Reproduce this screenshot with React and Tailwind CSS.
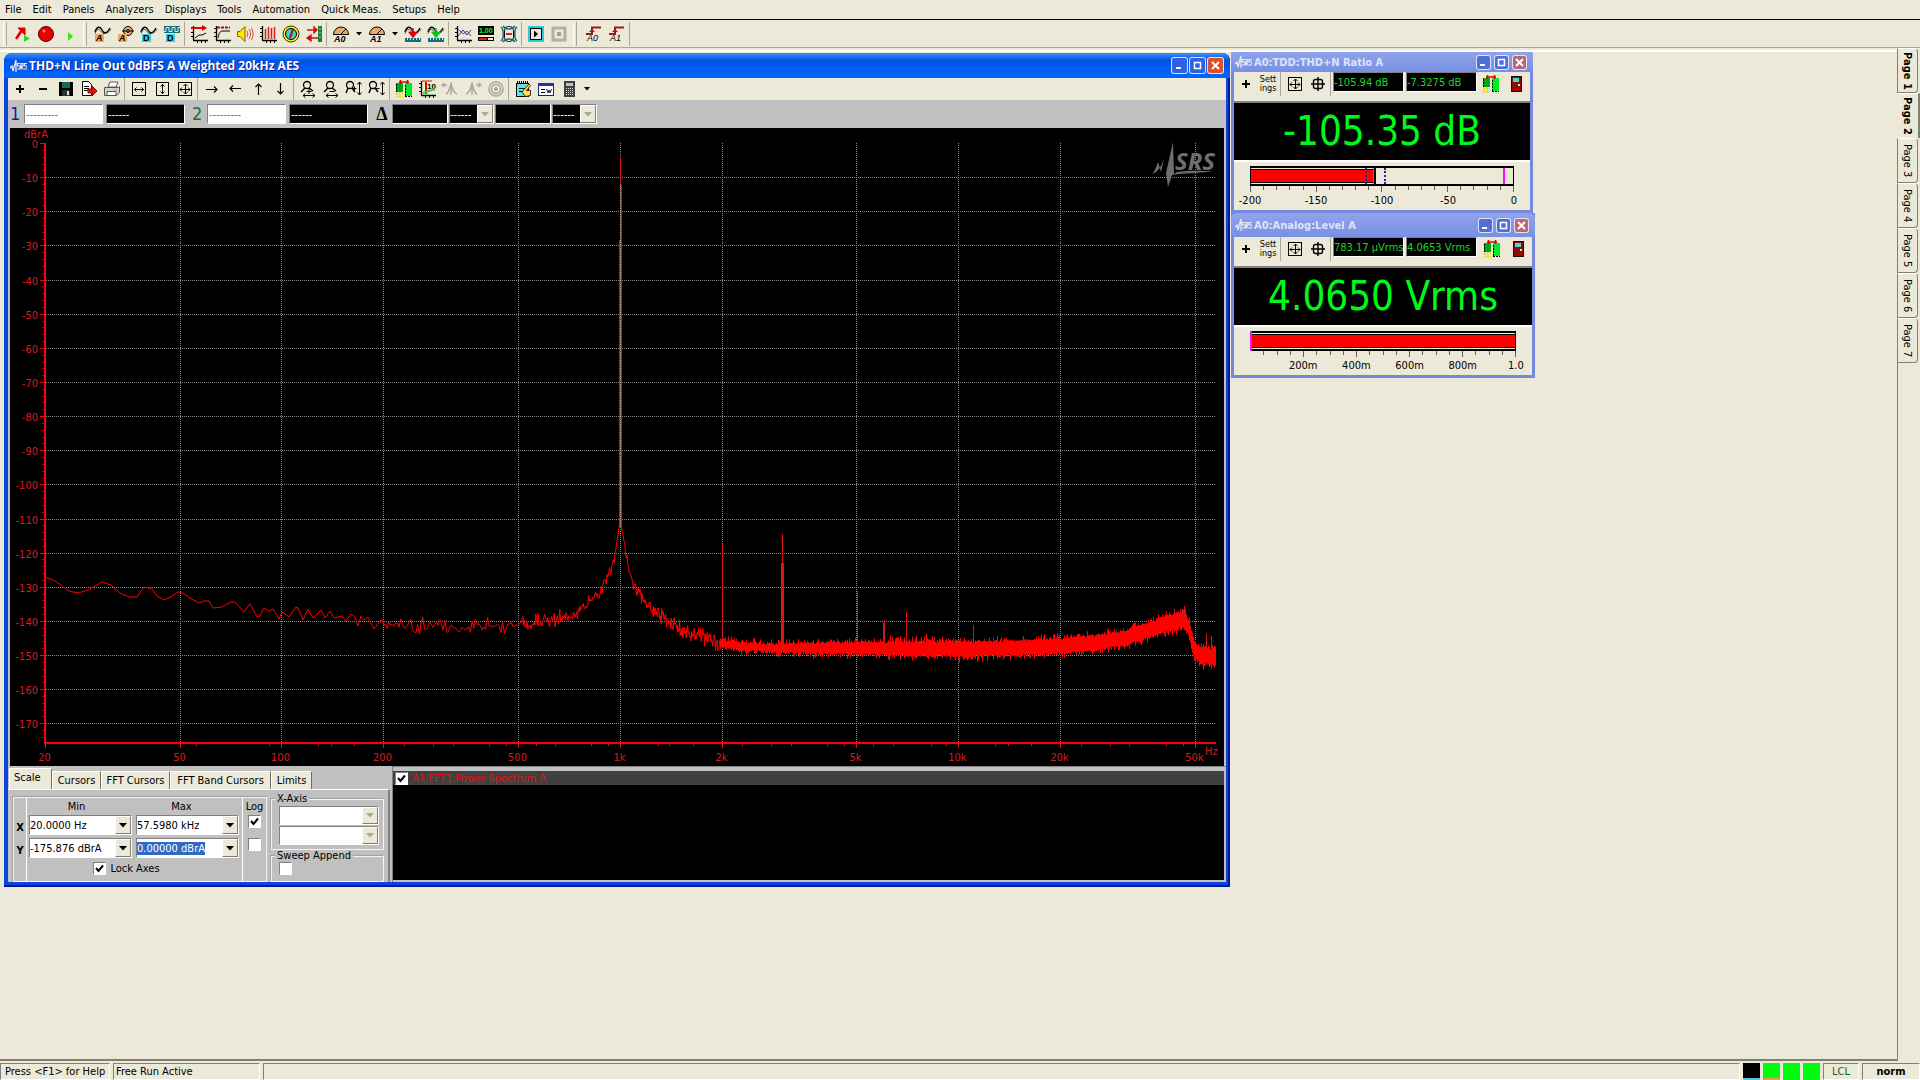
import React from "react";

/* ---------- icons ---------- */

const K = "#000";
const TAN = "#f0a868";
const CYAN = "#38d0d8";

function Svg({ children, w = 18 }) {
  return (
    <svg width={w} height="18" viewBox={`0 0 ${w} 18`} fill="none" stroke={K} aria-hidden="true" className="shrink-0">
      {children}
    </svg>
  );
}

const T = ({ x, y, s = 9, c = K, i, children }) => (
  <text x={x} y={y} fontSize={s} fill={c} stroke="none" fontWeight="bold" fontStyle={i ? "italic" : "normal"} fontFamily="Liberation Sans, sans-serif">
    {children}
  </text>
);

const Box = ({ x, y, w, h, c = K }) => <rect x={x} y={y} width={w} height={h} fill={c} stroke="none" />;

const Axes = ({ children }) => (
  <Svg>
    <path d="M3.500 1v14M3 15.500h15" strokeWidth="1.300" />
    <path d="M1 3.500h2M1 7.500h2M1 11.500h2M7.500 16v2M11.500 16v2M15.500 16v2" />
    {children}
  </Svg>
);

const Wave = () => <path d="M1 7c2-6 5-6 7-2s5 4 8-2" strokeWidth="1.400" />;
const WaveBack = () => <path d="M1 8.500c2-5 4-5 6-2s6 3 10-2" stroke="#444" strokeWidth="1" />;

const Dial = ({ label }) => (
  <Svg>
    <path d="M1.500 9.500a7.500 7.500 0 0 1 15 0z" fill={TAN} />
    <path d="M9 9l5-5" />
    <T x={2} y={17} s={9} i>{label}</T>
  </Svg>
);

const Step = ({ label }) => (
  <Svg>
    <path d="M2 9h6V2.500h9" stroke="#a01818" strokeWidth="2" />
    <path d="M8 4l-3 3h6z" fill="#a01818" stroke="none" />
    <text x="3" y="16" fontSize="9" fontStyle="italic" fill="#000" stroke="none" fontFamily="Liberation Sans, sans-serif">{label}</text>
  </Svg>
);

const Comb = ({ c }) => (
  <Svg>
    <Wave />
    <WaveBack />
    <path d="M9 3v6M5.500 7.500L9 12l3.500-4.500z" fill={c} stroke={c} strokeWidth="1.500" />
    <Box x={1} y={13} w={16} h={4} c="#206878" />
    <path d="M3.500 13v2M6.500 13v2M9.500 13v2M12.500 13v2M15.500 13v2" stroke="#9ff" />
  </Svg>
);

const Mag = ({ minus, vert }) => (
  <Svg>
    <circle cx={vert ? 5 : 8} cy="5" r="3.500" strokeWidth="1.300" />
    <path d={vert ? "M3 8l-2 5M7 8l3 4" : "M6 8l-4 4M10 8l4 3"} strokeWidth="1.500" />
    {vert ? (
      <>
        <path d="M14.500 2v13M12.500 4.500l2-2.500 2 2.500M12.500 12.500l2 2.500 2-2.500" />
        <path d={minus ? "M7.500 8.500h4" : "M7.500 8.500h4M9.500 6.500v4"} />
      </>
    ) : (
      <>
        <path d="M4 15.500h12M6.500 13.500l-2.500 2 2.500 2M13.500 13.500l2.500 2-2.500 2" />
        <path d={minus ? "M7.500 11.500h5" : "M7.500 11.500h5M10 9v5"} />
      </>
    )}
  </Svg>
);

const Bell = ({ flip }) => (
  <Svg>
    <g stroke="#a8a89c" strokeWidth="1.400" transform={flip ? "translate(18 0) scale(-1 1)" : undefined}>
      <path d="M5 14c3-1 4-6 5-11 1 5 2 10 6 11M10 2v13M1 5h5M3.500 3L1 5l2.500 2" />
    </g>
  </Svg>
);

const Compare = () => (
  <Svg>
    <Box x={1} y={3} w={7} h={9} c="#00a818" />
    <Box x={10} y={3} w={7} h={13} c="#00ee20" />
    <path d="M1.500 12V3M10.500 16V4M10 16.500h7" strokeDasharray="2 1" />
    <path d="M4 2h10M5.500 0v4M12.500 0v4" stroke="#e00000" strokeWidth="1.500" />
    <path d="M1 13.500h7M1 16.500h7" stroke="#e8d800" strokeWidth="2" strokeDasharray="2 1" />
  </Svg>
);

const Plus = () => <Svg><path d="M5 9h8M9 5v8" strokeWidth="2" /></Svg>;
const FitAll = () => (
  <Svg>
    <rect x="2.500" y="2.500" width="13" height="13" />
    <path d="M4 9.500h10M9.500 4v10M6 7.500l-2 2 2 2M12 7.500l2 2-2 2M7.500 6l2-2 2 2M7.500 12l2 2 2-2" />
  </Svg>
);
const Target = () => (
  <Svg>
    <rect x="4.500" y="4.500" width="9" height="9" rx="2" strokeWidth="1.400" />
    <path d="M2 9h14M9 2v14" strokeWidth="1.400" />
  </Svg>
);
const Door = () => (
  <Svg>
    <Box x={4} y={1} w={11} h={16} c="#300000" />
    <Box x={5} y={2} w={9} h={14} c="#900808" />
    <Box x={6} y={3} w={6} h={4} c="#40d8e8" />
    <Box x={11} y={9} w={2} h={2} c="#ffe060" />
  </Svg>
);

const Arrow = ({ r }) => (
  <Svg>
    <path d="M3 9.500h11M11 6.500l3 3-3 3" strokeWidth="1.200" transform={`rotate(${r} 9 9)`} />
  </Svg>
);

const I = {
  runStop: (
    <Svg>
      <path d="M2 14l6-9" stroke="#e00000" strokeWidth="2.500" />
      <path d="M4 3h7v7z" fill="#e00000" stroke="#e00000" />
      <path d="M10 10v7l6-3.500z" fill="#30d820" stroke="none" />
    </Svg>
  ),
  record: <Svg><circle cx="9" cy="9" r="7.500" fill="#e80000" stroke="#500" /><circle cx="7" cy="6" r="1.500" fill="#ff8080" stroke="none" /></Svg>,
  play: <Svg><path d="M8 7v9l5-4.500z" fill="#40e020" stroke="none" /></Svg>,
  genA: <Svg><Wave /><WaveBack /><Box x={1} y={9} w={9} h={8} c={TAN} /><T x={2} y={16} i>A</T></Svg>,
  anaA: (
    <Svg>
      <circle cx="11" cy="6" r="4.500" fill={TAN} /><circle cx="11" cy="6" r="1.500" fill="#fff" /><path d="M5 6h12" />
      <Box x={1} y={9} w={9} h={8} c={TAN} /><T x={2} y={16} i>A</T>
    </Svg>
  ),
  genD: <Svg><Wave /><WaveBack /><Box x={2} y={9} w={9} h={8} c={CYAN} /><T x={3} y={16}>D</T></Svg>,
  digD: (
    <Svg>
      <Box x={1} y={1} w={16} h={7} c="#206878" />
      <path d="M1 6.500h2v-4h3v4h3v-4h3v4h3v-4h2" stroke="#bff" />
      <Box x={3} y={9} w={9} h={8} c={CYAN} /><T x={4} y={16}>D</T>
    </Svg>
  ),
  sweep: <Axes><path d="M1 3h12" stroke="#e00000" strokeWidth="2" /><path d="M12 0l5 3-5 3z" fill="#e00000" stroke="none" /><path d="M5 13l4-3h3l4-2" /></Axes>,
  limit: <Axes><path d="M4 2.500h13" stroke="#c00030" strokeWidth="2" strokeDasharray="3 1" /><path d="M5 13c1-5 2-7 5-7h7" /></Axes>,
  speaker: (
    <Svg>
      <path d="M1.500 6.500H4l5-5v15l-5-5H1.500z" fill="#ffe800" stroke="#806000" />
      <path d="M11 6c1 2 1 4 0 6M13 4c2 3 2 7 0 10M15.500 3c2 4 2 8 0 12" stroke="#e04040" />
    </Svg>
  ),
  bars: <Axes><path d="M6.500 14V4M9.500 14V2M12.500 14V3M15.500 14V2" stroke="#d02020" strokeWidth="1.500" /></Axes>,
  gauge: (
    <Svg>
      <circle cx="9" cy="9" r="8" fill="#ffe820" stroke="#403800" /><circle cx="9" cy="9" r="5.500" fill={CYAN} />
      <path d="M8 13L11 4" stroke="#c00000" strokeWidth="2" />
    </Svg>
  ),
  inout: (
    <Svg>
      <Box x={13} y={1} w={4} h={16} c="#208030" /><path d="M15 3v12" stroke="#60f060" strokeDasharray="2 2" />
      <path d="M2 5h10M9 2l3 3-3 3zM13 13H3M6 10l-4 3 4 3z" stroke="#d01010" fill="#d01010" strokeWidth="1.300" />
    </Svg>
  ),
  graph: <Axes><path d="M4 4l5 5 4-3 4 5" stroke="#d02020" /><path d="M4 11l5-6 4 5 4-5" stroke="#2030c0" /></Axes>,
  meter: (
    <Svg>
      <Box x={1} y={1} w={16} h={9} /><T x={2} y={8} s={7} c="#20f030">1.00</T>
      <Box x={1} y={12} w={16} h={4} /><Box x={2} y={13} w={8} h={2} c="#d02020" /><Box x={11} y={13} w={5} h={2} c="#ffe8b0" />
    </Svg>
  ),
  eye: (
    <Svg>
      <rect x="4.500" y="1.500" width="9" height="15" rx="4" />
      <path d="M1 2c3 2 3 12 0 14M17 2c-3 2-3 12 0 14M3 1c3 4 9 4 12 0M3 17c3-4 9-4 12 0" stroke="#206878" strokeWidth="1.500" />
      <path d="M6 9h6" stroke="#e02020" strokeWidth="2" />
    </Svg>
  ),
  runBox: <Svg><rect x="2" y="2" width="14" height="14" stroke="#30c8e0" strokeWidth="2" /><rect x="3.500" y="3.500" width="11" height="11" /><path d="M7 5.500v7l4-3.500z" fill={K} stroke="none" /></Svg>,
  stopBox: <Svg><rect x="3" y="3" width="12" height="12" stroke="#b0b0a4" strokeWidth="3" /><Box x={7} y={7} w={4} h={4} c="#a0a094" /></Svg>,
  minus: <Svg><path d="M5 9h8" strokeWidth="2" /></Svg>,
  save: <Svg><Box x={2} y={2} w={14} h={14} /><Box x={5} y={2} w={8} h={6} c="#186858" /><Box x={5} y={10} w={8} h={6} c="#303030" /><Box x={10} y={11} w={2} h={4} c="#ddd" /></Svg>,
  exp: (
    <Svg>
      <path d="M2.500 1.500h6l3 3v11h-9z" fill="#fff" /><path d="M4 6.500h5M4 8.500h5M4 10.500h5" />
      <path d="M8 9h4V6l5 5-5 5v-3H8z" fill="#e01010" stroke="#900" />
    </Svg>
  ),
  print: (
    <Svg>
      <path d="M5 7l2-5h8l-2 5z" fill="#fff" stroke="#555" /><path d="M1.500 7.500h14l1-1v6l-3 3h-12z" fill="#d4d4cc" stroke="#555" />
      <path d="M4 11.500h9v4H4z" fill="#fff" stroke="#555" /><Box x={11} y={9} w={3} h={1} c="#c0c000" />
    </Svg>
  ),
  fitX: <Svg><rect x="2.500" y="2.500" width="13" height="13" /><path d="M4 9.500h10M6.500 7.500l-2 2 2 2M11.500 7.500l2 2-2 2" /></Svg>,
  fitY: <Svg><rect x="3.500" y="2.500" width="12" height="13" /><path d="M9.500 4v10M7.500 6.500l2-2 2 2M7.500 11.500l2 2 2-2" /></Svg>,
  log10: <Axes><path d="M8 2v12" stroke="#d01010" strokeWidth="2" /><T x={9} y={9} s={8}>10</T><path d="M5 13l12-4" stroke="#30d830" strokeWidth="2" /><path d="M4 1h10" stroke="#d01010" /></Axes>,
  rings: <Svg><circle cx="9" cy="9" r="7" stroke="#a8a89c" strokeWidth="1.500" /><circle cx="9" cy="9" r="4.500" stroke="#a8a89c" strokeWidth="1.500" /><circle cx="9" cy="9" r="1.500" stroke="#a8a89c" fill="#a8a89c" /></Svg>,
  notes: (
    <Svg>
      <rect x="2.500" y="3.500" width="12" height="13" fill="#60e0e8" /><path d="M3 2.500h12" strokeDasharray="1 1" strokeWidth="3" />
      <path d="M5 8.500h6M5 11.500h4" /><path d="M8 12l7-8 1.500 1.500-4 5h4v5l-5 1z" fill="#ffe060" stroke="#403000" />
    </Svg>
  ),
  form: (
    <Svg>
      <rect x="1.500" y="3.500" width="15" height="12" fill="#fff" stroke="#102080" /><Box x={1} y={3} w={16} h={3} c="#1838b0" />
      <path d="M4 9.500h4M4 12.500h4" /><path d="M9.500 9l1.500 4 1-3 1 3 1.500-4" stroke="#102080" />
    </Svg>
  ),
  calc: <Svg><Box x={4} y={1} w={11} h={16} c="#404040" /><Box x={6} y={3} w={7} h={3} c="#b8c8b8" /><path d="M6 8.500h7M6 10.500h7M6 12.500h7M6 14.500h7" stroke="#ddd" strokeDasharray="1 1" /></Svg>,
};

const Srs = () => (
  <svg width="17" height="16" viewBox="0 0 17 16" fill="none" aria-hidden="true" className="shrink-0">
    <path d="M0 10l2-2 1 5 3-11v12" stroke="#e8e8e8" strokeWidth="1.300" />
    <path d="M10 5.500H7.500v2.500H10v3H7M11 11.500v-6h2V8h-2l2.500 3.500M17 5.500h-2.500v2.500H17v3h-3" stroke="#e8e8e8" strokeWidth="1.200" />
  </svg>
);

/* ---------- small controls ---------- */

const Tool = ({ label, children }) => (
  <button type="button" aria-label={label} className="flex h-6 w-[23px] shrink-0 items-center justify-center">
    {children}
  </button>
);

const Sep = () => <span className="ml-px mr-0.5 h-6 w-px shrink-0 bg-[#aca899]" />;
const Grip = () => <span className="ml-[3px] mr-1 h-6 w-1 shrink-0 border-x border-l-white border-r-[#aca899]" />;

const Drop = ({ label }) => (
  <button type="button" aria-label={label} className="flex h-6 w-[13px] shrink-0 items-center justify-center">
    <svg width="6" height="4" viewBox="0 0 6 4" aria-hidden="true"><path d="M0 0h6L3 3.500z" /></svg>
  </button>
);

const SUNK = "border border-l-[#808080] border-t-[#808080] border-r-white border-b-white";
const RAISED = "border border-l-white border-t-white border-r-[#808070] border-b-[#808070]";

const ComboArrow = ({ off }) => (
  <svg width="8" height="5" viewBox="0 0 8 5" aria-hidden="true"><path d="M0 0h8L4 4.500z" fill={off ? "#aca899" : "#000"} /></svg>
);

function Combo({ label, value, selected }) {
  return (
    <div className={`flex h-5 w-[103px] items-center bg-white ${SUNK}`}>
      <div className="flex min-w-0 flex-1">
        <input
          aria-label={label}
          defaultValue={value}
          className={`min-w-0 outline-none [field-sizing:content] ${selected ? "bg-[#316ac5] text-white" : "bg-white text-black"}`}
        />
      </div>
      <button type="button" aria-label={`${label} list`} className={`flex h-full w-4 items-center justify-center bg-[#ece9d8] ${RAISED}`}>
        <ComboArrow />
      </button>
    </div>
  );
}

function DisabledSelect({ label, dark }) {
  return (
    <div className={`flex items-center ${SUNK} ${dark ? "h-5 w-[45px] bg-black text-white" : "h-[19px] w-full bg-white"}`}>
      <select disabled aria-label={label} className="h-full min-w-0 flex-1 appearance-none overflow-hidden bg-transparent opacity-100 outline-none">
        <option>{dark ? "------" : ""}</option>
      </select>
      <span className={`flex h-full w-4 shrink-0 items-center justify-center bg-[#ece9d8] ${RAISED}`}>
        <ComboArrow off />
      </span>
    </div>
  );
}

function Check({ label, on, children }) {
  return (
    <label className="flex items-center gap-1">
      <input type="checkbox" defaultChecked={on} aria-label={label} className="peer sr-only" />
      <span className={`flex size-[13px] items-center justify-center bg-white ${SUNK} [&>svg]:invisible peer-checked:[&>svg]:visible`}>
        <svg width="9" height="9" viewBox="0 0 9 9" fill="none" stroke="#000" strokeWidth="2" aria-hidden="true"><path d="M1 4l2.500 3L8 1.500" /></svg>
      </span>
      {children}
    </label>
  );
}

function WinButtons({ active }) {
  const blue = active ? "bg-[#2f62e0]" : "bg-[#5070d8]";
  const red = active ? "bg-[#e0502c]" : "bg-[#b86878]";
  const base = "flex items-center justify-center rounded-[3px] border border-white/80";
  const size = active ? "size-[17px]" : "size-[15px]";
  return (
    <div className={`flex ${active ? "gap-px" : "gap-[3px]"}`}>
      <button type="button" aria-label="Minimize" className={`${base} ${size} ${blue}`}>
        <svg width="11" height="11" viewBox="0 0 11 11" aria-hidden="true"><path d="M2 7h5v2H2z" fill="#fff" /></svg>
      </button>
      <button type="button" aria-label="Maximize" className={`${base} ${size} ${blue}`}>
        <svg width="11" height="11" viewBox="0 0 11 11" fill="none" stroke="#fff" aria-hidden="true"><path d="M2.500 2.500h6v6h-6zM2 2.500h7" strokeWidth="1.500" /></svg>
      </button>
      <button type="button" aria-label="Close" className={`${base} ${size} ${red}`}>
        <svg width="11" height="11" viewBox="0 0 11 11" fill="none" stroke="#fff" strokeWidth="2" aria-hidden="true"><path d="M2 2l7 7M9 2l-7 7" /></svg>
      </button>
    </div>
  );
}

/* ---------- spectrum graph ---------- */

const X0 = 45;
const DECADE = 338.3;
const xOf = (f) => Math.round(X0 + DECADE * Math.log10(f / 20)) + 0.5;
const yOf = (db) => Math.round(143.1 - db * 3.413) + 0.5;

const LOW = [
  [45, 577], [53, 580], [61, 585], [69, 591], [78, 593], [88, 590], [102, 582], [111, 585], [120, 593], [129, 597], [137, 597],
  [144, 587], [152, 589], [157, 596], [164, 600], [171, 597], [178, 592], [183, 593], [190, 598], [199, 603], [204, 601], [209, 601],
  [213, 608], [222, 607], [231, 602], [235, 602], [244, 612], [250, 604], [257, 617], [260, 616], [264, 608], [269, 611], [273, 609],
  [279, 619], [282, 612], [289, 617], [296, 607], [298, 608], [303, 620], [308, 609], [313, 618], [321, 610], [325, 618], [330, 611],
  [334, 618], [342, 616], [346, 621], [351, 614], [355, 617], [358, 626], [361, 616], [364, 620], [368, 617], [374, 629], [380, 621],
];

/* x, centre of the trace, half height of the noise */
const ENV = [
  [380, 624, 5], [410, 624, 8], [449, 629, 8], [490, 626, 8], [522, 624, 8], [550, 620, 8], [570, 615, 7], [583, 608, 7],
  [592, 600, 6], [600, 593, 6], [607, 580, 9], [612, 567, 7], [615, 555, 4], [618, 535, 1], [620, 520, 0], [622, 530, 1],
  [625, 548, 4], [628, 568, 8], [633, 580, 8], [638, 592, 7], [645, 603, 7], [656, 614, 7], [671, 623, 9], [691, 633, 9],
  [715, 642, 8], [738, 646, 8], [770, 648, 8], [860, 648, 9], [960, 649, 9], [1015, 648, 9], [1062, 646, 9], [1094, 643, 9],
  [1120, 639, 9], [1140, 633, 9], [1165, 624, 10], [1184, 619, 10], [1188, 627, 10], [1194, 650, 10], [1200, 655, 10], [1215, 657, 11],
];

const SPIKES = [
  [722, 544, 1], [782, 563, 3], [782, 534, 1], [857, 591, 1], [883, 622, 2], [884, 620, 1], [906, 612, 1], [926, 634, 1],
  [973, 625, 1], [997, 636, 1], [1182, 609, 1, 619], [1184, 606, 1, 619], [1206, 634, 1], [1211, 636, 1],
];

const MINOR = [
  196, 269, 318, 331, 354, 404, 433, 453, 489, 506, 536, 555, 591, 608, 658, 669, 693, 742, 771, 791, 827, 844, 873, 893,
  931, 946, 995, 1008, 1031, 1081, 1110, 1129, 1166, 1183,
];

function envelope(x) {
  let i = 1;
  while (i < ENV.length - 1 && ENV[i][0] < x) i += 1;
  const [a, b] = [ENV[i - 1], ENV[i]];
  const t = (x - a[0]) / (b[0] - a[0]);
  return [a[1] + (b[1] - a[1]) * t, a[2] + (b[2] - a[2]) * t];
}

function buildTrace() {
  let seed = 20;
  const rnd = () => {
    seed = (seed * 1103515245 + 12345) % 2147483648;
    return seed / 2147483648;
  };
  const pts = LOW.map((p) => p.join(" "));
  let x = 382;
  while (x < 1216) {
    const [mid, amp] = envelope(x);
    if (x < 720) {
      pts.push(`${x.toFixed(1)} ${(mid + (rnd() + rnd() - 1) * amp * 1.3).toFixed(1)}`);
      x += x < 520 ? 1.7 : x < 640 ? 0.8 : 0.5;
    } else {
      const fill = Math.min(0.65, 0.25 + (x - 720) / 500);
      const up = fill + rnd() * 0.3 + rnd() ** 4 * 0.6;
      const down = fill + rnd() * 0.3 + rnd() ** 4 * 0.6;
      pts.push(`${Math.round(x) + 0.5} ${(mid - amp * up).toFixed(1)}`);
      pts.push(`${Math.round(x) + 0.5} ${(mid + amp * down).toFixed(1)}`);
      x += 1;
    }
  }
  return `M${pts.join("L")}`;
}

const TRACE = buildTrace();

const X_LABELS = [[20, "20"], [50, "50"], [100, "100"], [200, "200"], [500, "500"], [1000, "1k"], [2000, "2k"], [5000, "5k"], [10000, "10k"], [20000, "20k"], [50000, "50k"]];
const Y_LABELS = Array.from({ length: 18 }, (_, i) => -10 * i);

function Graph() {
  return (
    <svg viewBox="10 128 1214 638" className="block h-auto w-full bg-black" role="img" aria-label="Power spectrum" fontSize="11">
      <g stroke="#8a8a8a" strokeDasharray="1 1" shapeRendering="crispEdges">
        {Y_LABELS.slice(1).map((d) => <path key={d} d={`M46 ${yOf(d)}H1215`} />)}
        {X_LABELS.slice(1).map(([f]) => <path key={f} d={`M${xOf(f)} 143V742`} />)}
      </g>
      <g fill="#6e6e6e">
        <path d="M1152 174c6-2 9-7 12-15l2 14 7-31 1 32 3-2c12-2 26-1 36-1-12 2-25 2-35 3l-6 1-4 12-4-28-3 13-3-10c-2 6-4 10-6 12z" />
        <text x="1175" y="170" fontSize="24" fontStyle="italic" fontWeight="bold" fontFamily="Open Sans, sans-serif">SRS</text>
      </g>
      <path d={TRACE} fill="none" stroke="#f00" strokeWidth="1" />
      <g stroke="#d81414" shapeRendering="crispEdges">
        {SPIKES.map(([x, y, w, end = 648]) => <path key={`${x}-${y}`} d={`M${x + 0.5} ${y}V${end}`} strokeWidth={w} />)}
        <path d="M620.500 157V185" strokeWidth="1" />
        <path d="M621 185V240" stroke="#f00" strokeWidth="2" />
        <path d="M620.500 240V528" stroke="#c81818" strokeWidth="3" />
      </g>
      <path d="M620.500 184V528" stroke="#d0a090" strokeDasharray="1 1" shapeRendering="crispEdges" />
      <g stroke="#f00" shapeRendering="crispEdges">
        <path d="M45 143V744M44 743H1216" strokeWidth="2" />
        {Y_LABELS.map((d) => <path key={d} d={`M40 ${yOf(d)}H45`} />)}
        {Array.from({ length: 88 }, (_, i) => <path key={i} d={`M42 ${yOf(-2 * i)}H45`} opacity="0.7" />)}
        {X_LABELS.map(([f]) => <path key={f} d={`M${xOf(f)} 743V748`} />)}
        {MINOR.map((x) => <path key={x} d={`M${x + 0.5} 743V746`} />)}
      </g>
      <g fill="#d81c1c">
        {Y_LABELS.map((d) => <text key={d} x="38" y={yOf(d) + 4} textAnchor="end">{d}</text>)}
        {X_LABELS.map(([f, t]) => <text key={f} x={xOf(f) - 1} y="761" textAnchor="middle">{t}</text>)}
        <text x="24" y="138">dBrA</text>
        <text x="1205" y="755">Hz</text>
      </g>
    </svg>
  );
}

/* ---------- main analyzer window ---------- */

const Readout = ({ label, white, wide }) => (
  <input
    aria-label={label}
    readOnly
    value={wide ? "" : white ? "---------" : "------"}
    className={`h-5 min-w-0 px-px outline-none ${SUNK} ${wide ? "w-14" : "w-[79px]"} ${white ? "bg-white text-[#707070]" : "bg-black text-white"}`}
  />
);

const TABS = ["Scale", "Cursors", "FFT Cursors", "FFT Band Cursors", "Limits"];
const TAB_W = ["w-[43px] text-left", "w-[49px]", "w-[69px]", "w-[101px]", "w-[41px]"];

const GROUP = "border border-[#f4f4f0] shadow-[-1px_-1px_0_#a0a0a0]";

function ScalePanel() {
  return (
    <div className="flex w-[382px] shrink-0 flex-col bg-[#c0c0c0] pt-0.5">
      <div className="flex items-end pl-px" role="tablist">
        {TABS.map((t, i) => (
          <button
            key={t}
            type="button"
            role="tab"
            aria-selected={i === 0}
            className={`border-l border-t border-r border-l-white border-t-white border-r-[#707068] bg-[#ece9d8] px-0.5 whitespace-nowrap ${TAB_W[i]} ${i === 0 ? "h-[21px] pl-1 pb-1" : "h-[18px]"}`}
          >
            {t}
          </button>
        ))}
      </div>
      <div className="flex flex-1 gap-1 border-r-2 border-t border-r-[#808080] border-t-white pl-[5px] pr-1 pt-[7px]">
        <div className={`flex ${GROUP}`}>
          <div className="flex w-[13px] flex-col items-center gap-2.5 border-r border-white pt-[23px] font-bold">
            <span>X</span>
            <span>Y</span>
          </div>
          <div className="flex w-[216px] flex-col border-r border-white px-0.5 pt-0.5">
            <div className="flex gap-1 text-center">
              <span className="w-[103px] pr-2">Min</span>
              <span className="w-[103px] pr-3">Max</span>
            </div>
            <div className="mt-0.5 grid grid-cols-[103px_103px] gap-x-1 gap-y-[3px]">
              <Combo label="X min" value="20.0000 Hz" />
              <Combo label="X max" value="57.5980 kHz" />
              <Combo label="Y min" value="-175.876 dBrA" />
              <Combo label="Y max" value="0.00000 dBrA" selected />
            </div>
            <div className="mt-1 flex justify-center pr-4"><Check label="Lock axes" on>Lock Axes</Check></div>
          </div>
          <div className="flex w-[23px] flex-col items-center pt-0.5">
            <span>Log</span>
            <div className="mt-0.5 flex flex-col gap-2.5">
              <Check label="X log" on />
              <Check label="Y log" />
            </div>
          </div>
        </div>
        <div className="flex flex-1 flex-col">
          <fieldset className={`-mt-1 flex flex-col pr-1 pl-[7px] pb-1 ${GROUP}`}>
            <legend className="-ml-1 bg-[#c0c0c0] px-0.5 leading-3">X-Axis</legend>
            <div className="mt-px flex flex-col gap-px">
              <DisabledSelect label="X axis source" />
              <DisabledSelect label="X axis unit" />
            </div>
          </fieldset>
          <fieldset className={`flex-1 px-[7px] ${GROUP}`}>
            <legend className="-ml-1 bg-[#c0c0c0] px-0.5 leading-3">Sweep Append</legend>
            <Check label="Sweep append" />
          </fieldset>
        </div>
      </div>
    </div>
  );
}

function AnalyzerWindow() {
  return (
    <section className="mt-px flex w-[calc(100%-667px)] min-w-[900px] flex-col self-start rounded-t-lg bg-[#0b45dc] shadow-[inset_-2px_-2px_0_#0018a0]">
      <header className="flex h-[25px] items-center gap-0.5 rounded-t-lg bg-linear-to-b from-[#3a8cf8] via-[#0054e4] via-30% to-[#0066ff] pl-1.5 pr-1.5 text-white">
        <Srs />
        <h1 className="flex-1 text-xs font-bold [font-family:'Open_Sans',sans-serif] [text-shadow:1px_1px_0_#0a1883]">
          THD+N Line Out 0dBFS A Weighted 20kHz AES
        </h1>
        <WinButtons active />
      </header>
      <div className="mx-1 mb-[5px]">
        <div className="flex h-[22px] items-center overflow-hidden bg-[#ece9d8]">
          <Tool label="Add"><Plus /></Tool>
          <Tool label="Remove">{I.minus}</Tool>
          <Tool label="Save">{I.save}</Tool>
          <Tool label="Export">{I.exp}</Tool>
          <Tool label="Print">{I.print}</Tool>
          <Sep />
          <Tool label="Fit X">{I.fitX}</Tool>
          <Tool label="Fit Y">{I.fitY}</Tool>
          <Tool label="Fit both"><FitAll /></Tool>
          <Sep />
          <Tool label="Pan right"><Arrow r={0} /></Tool>
          <Tool label="Pan left"><Arrow r={180} /></Tool>
          <Tool label="Pan up"><Arrow r={-90} /></Tool>
          <Tool label="Pan down"><Arrow r={90} /></Tool>
          <Sep />
          <Tool label="Zoom in X"><Mag /></Tool>
          <Tool label="Zoom out X"><Mag minus /></Tool>
          <Tool label="Zoom in Y"><Mag vert /></Tool>
          <Tool label="Zoom out Y"><Mag vert minus /></Tool>
          <Sep />
          <Tool label="Reference"><Compare /></Tool>
          <Tool label="Log scale">{I.log10}</Tool>
          <Tool label="Previous peak"><Bell /></Tool>
          <Tool label="Next peak"><Bell flip /></Tool>
          <Tool label="Rings">{I.rings}</Tool>
          <Sep />
          <Tool label="Notes">{I.notes}</Tool>
          <Tool label="Properties">{I.form}</Tool>
          <Tool label="Calculator">{I.calc}</Tool>
          <Drop label="Calculator options" />
        </div>
        <div className="flex h-7 items-center bg-[#c0c0c0] pl-0.5">
          <span className="w-3.5 text-[18px] leading-5 text-[#1818b0]">1</span>
          <div className="flex gap-[3px]"><Readout label="Cursor 1 X" white /><Readout label="Cursor 1 Y" /></div>
          <span className="ml-[7px] w-[15px] text-[18px] leading-5 text-[#187030]">2</span>
          <div className="flex gap-[3px]"><Readout label="Cursor 2 X" white /><Readout label="Cursor 2 Y" /></div>
          <span className="ml-1.5 w-4 text-center text-[18px] font-bold leading-5 [font-family:'Liberation_Serif',serif]">Δ</span>
          <div className="ml-0.5 flex gap-px">
            <Readout label="Delta X" wide /><DisabledSelect label="Delta X unit" dark />
            <Readout label="Delta Y" wide /><DisabledSelect label="Delta Y unit" dark />
          </div>
        </div>
        <div className="bg-[#c0c0c0] px-0.5"><Graph /></div>
        <div className="flex h-[116px] bg-[#c0c0c0]">
          <ScalePanel />
          <div className="ml-0.5 flex-1 border-l border-t border-[#808080] pt-1 pr-0.5 pb-0.5">
            <div className="h-full bg-black">
              <div className="flex h-3.5 items-center bg-[#404040] pl-0.5 text-[#e01010]">
                <Check label="Show trace" on>A1:FFT1:Power Spectrum A</Check>
              </div>
            </div>
          </div>
        </div>
      </div>
    </section>
  );
}

/* ---------- meter windows ---------- */

const Small = ({ label, value }) => (
  <input aria-label={label} readOnly value={value} className={`h-5 w-[71px] bg-black text-[#20d030] outline-none ${SUNK}`} />
);

function MeterWindow({ title, low, high, reading, major, skipFirst, labels, children, first }) {
  return (
    <section className="flex flex-col bg-[#7488dc] pb-[3px]">
      <header className={`flex items-center gap-0.5 bg-linear-to-b from-[#90a4ec] to-[#7890e4] pl-1 pr-1.5 ${first ? "h-5" : "h-6 rounded-t-md"}`}>
        <Srs />
        <h2 className="flex-1 text-[11px] font-bold text-[#dce4fa]">{title}</h2>
        <WinButtons />
      </header>
      <div className="mx-[3px] bg-[#ece9d8]">
        <div className="flex h-[29px] items-start overflow-hidden">
          <Tool label="Add"><Plus /></Tool>
          <button type="button" className="h-6 w-[22px] shrink-0 text-center text-[9px] leading-[9px]">Sett ings</button>
          <Sep />
          <Tool label="Fit"><FitAll /></Tool>
          <Tool label="Center"><Target /></Tool>
          <Sep />
          <div className="flex gap-0.5"><Small label="Minimum" value={low} /><Small label="Maximum" value={high} /></div>
          <div className="flex flex-1 justify-evenly"><Tool label="Reference"><Compare /></Tool><Tool label="Close panel"><Door /></Tool></div>
        </div>
        <div className="h-[61px] border-b-2 border-t-2 border-b-white border-t-[#808080] bg-black text-center text-[40px] leading-[56px] text-[#00f81c]">
          <output>{reading}</output>
        </div>
        <div className="px-4 pt-1">
          <div className="relative h-5 border-2 border-x border-black py-px">{children}</div>
          <div className="flex h-1.5 justify-between">
            {Array.from({ length: 21 }, (_, i) => (
              <span key={i} className={`w-px ${i % major === 0 ? "h-1.5" : "h-1"} ${skipFirst && i === 0 ? "bg-transparent" : "bg-black/60"}`} />
            ))}
          </div>
          <div className="mt-0.5 flex h-4 justify-between">
            {labels.map((l, i) => (
              <span key={i} className="flex w-0 justify-center whitespace-nowrap">{l}</span>
            ))}
          </div>
        </div>
      </div>
    </section>
  );
}

/* ---------- application shell ---------- */

const MENU = ["File", "Edit", "Panels", "Analyzers", "Displays", "Tools", "Automation", "Quick Meas.", "Setups", "Help"];
const PAGES = [1, 2, 3, 4, 5, 6, 7];

export default function App() {
  return (
    <div className="flex min-h-screen flex-col bg-[#ece9d8] text-[11px] leading-[13px] text-black [font-family:'DejaVu_Sans_Condensed','DejaVu_Sans',sans-serif]">
      <nav className="flex h-[19px] items-center gap-[11px] pl-[5px]">
        {MENU.map((m) => <button key={m} type="button">{m}</button>)}
      </nav>
      <div className="flex h-7 items-center border-t border-black">
        <Grip />
        <Tool label="Run">{I.runStop}</Tool>
        <Tool label="Record">{I.record}</Tool>
        <Tool label="Play">{I.play}</Tool>
        <Grip />
        <Tool label="Analog generator">{I.genA}</Tool>
        <Tool label="Analog analyzer">{I.anaA}</Tool>
        <Tool label="Digital generator">{I.genD}</Tool>
        <Tool label="Digital analyzer">{I.digD}</Tool>
        <Sep />
        <Tool label="Sweep">{I.sweep}</Tool>
        <Tool label="Limits">{I.limit}</Tool>
        <Tool label="Monitor">{I.speaker}</Tool>
        <Tool label="Spectrum">{I.bars}</Tool>
        <Tool label="Clock">{I.gauge}</Tool>
        <Tool label="Switcher">{I.inout}</Tool>
        <Sep />
        <Tool label="Analyzer A0"><Dial label="A0" /></Tool>
        <Drop label="A0 options" />
        <Tool label="Analyzer A1"><Dial label="A1" /></Tool>
        <Drop label="A1 options" />
        <Tool label="Input bits"><Comb c="#e00000" /></Tool>
        <Tool label="Output bits"><Comb c="#10c020" /></Tool>
        <Sep />
        <Tool label="Graph">{I.graph}</Tool>
        <Tool label="Meter">{I.meter}</Tool>
        <Tool label="Eye diagram">{I.eye}</Tool>
        <Sep />
        <Tool label="Run script">{I.runBox}</Tool>
        <Tool label="Stop script">{I.stopBox}</Tool>
        <Grip />
        <Tool label="Trigger A0"><Step label="A0" /></Tool>
        <Tool label="Trigger A1"><Step label="A1" /></Tool>
        <span className="ml-0.5 h-6 w-px bg-[#aca899]" />
      </div>

      <div className="flex flex-1 border-t border-[#aca899]">
        <main className="mt-0.5 flex flex-1 border-t-2 border-t-white border-b-2 border-b-[#808070] pl-1">
          <AnalyzerWindow />
          <div className="ml-px flex w-[304px] shrink-0 flex-col">
            <div className="pr-0.5">
              <MeterWindow
                first
                title="A0:TDD:THD+N Ratio A"
                low="-105.94 dB"
                high="-7.3275 dB"
                reading="-105.35 dB"
                major={5}
                labels={["-200", "-150", "-100", "-50", "0"]}
              >
                <div className="h-3.5 w-[47%] border-y border-black bg-[#f00]" />
                <span className="absolute inset-y-0 left-[43.5%] w-0 border-l-2 border-dotted border-[#2020c0]" />
                <span className="absolute inset-y-0 left-[46.6%] w-px bg-[#e020e0]" />
                <span className="absolute inset-y-0 left-[47%] w-0.5 bg-black" />
                <span className="absolute inset-y-0 left-[50.8%] w-0 border-l-2 border-dotted border-[#2020c0]" />
                <span className="absolute inset-y-0 left-[96%] w-0.5 bg-[#f010f0]" />
              </MeterWindow>
            </div>
            <MeterWindow
              title="A0:Analog:Level A"
              low="783.17 µVrms"
              high="4.0653 Vrms"
              reading="4.0650 Vrms"
              major={4}
              skipFirst
              labels={["", "200m", "400m", "600m", "800m", "1.0"]}
            >
              <div className="h-3.5 border-y border-black bg-[#f00]" />
              <span className="absolute -inset-y-0.5 -left-px w-0.5 bg-[#f010f0]" />
            </MeterWindow>
          </div>
        </main>

        <div className="flex w-[23px] flex-col" role="tablist" aria-label="Pages">
          {PAGES.map((p) => (
            <button
              key={p}
              type="button"
              role="tab"
              aria-selected={p === 2}
              className={`flex h-[45px] items-center justify-center border-t border-t-white [writing-mode:vertical-rl] ${
                p < 3 ? "font-bold" : ""
              } ${p === 2 ? "w-[23px] border-r-2 border-r-[#808070]" : "w-[21px] rounded-r-sm border-b border-l border-r border-[#808070]"}`}
            >
              Page {p}
            </button>
          ))}
          <div className="flex-1 border-l border-[#808070]" />
        </div>
      </div>

      <footer className="flex h-[19px] items-end gap-[3px] pt-0.5">
        <span className={`h-full w-[110px] pl-1 leading-4 whitespace-nowrap ${SUNK}`}>Press &lt;F1&gt; for Help</span>
        <span className={`h-full w-[147px] pl-0.5 leading-4 ${SUNK}`}>Free Run Active</span>
        <span className={`h-full flex-1 ${SUNK}`} />
        <span className="h-full w-[17px] border-b-2 border-[#50c8e0] bg-black" />
        <span className="h-full w-[17px] border-b-2 border-[#e0a050] bg-[#00fa10]" />
        <span className="h-full w-[17px] bg-[#00fa10]" />
        <span className="h-full w-[17px] bg-[#00fa10]" />
        <span className={`h-full w-9 text-center leading-4 text-[#206020] ${SUNK}`}>LCL</span>
        <span className={`h-full w-[58px] text-center font-bold leading-4 ${SUNK}`}>norm</span>
      </footer>
    </div>
  );
}
